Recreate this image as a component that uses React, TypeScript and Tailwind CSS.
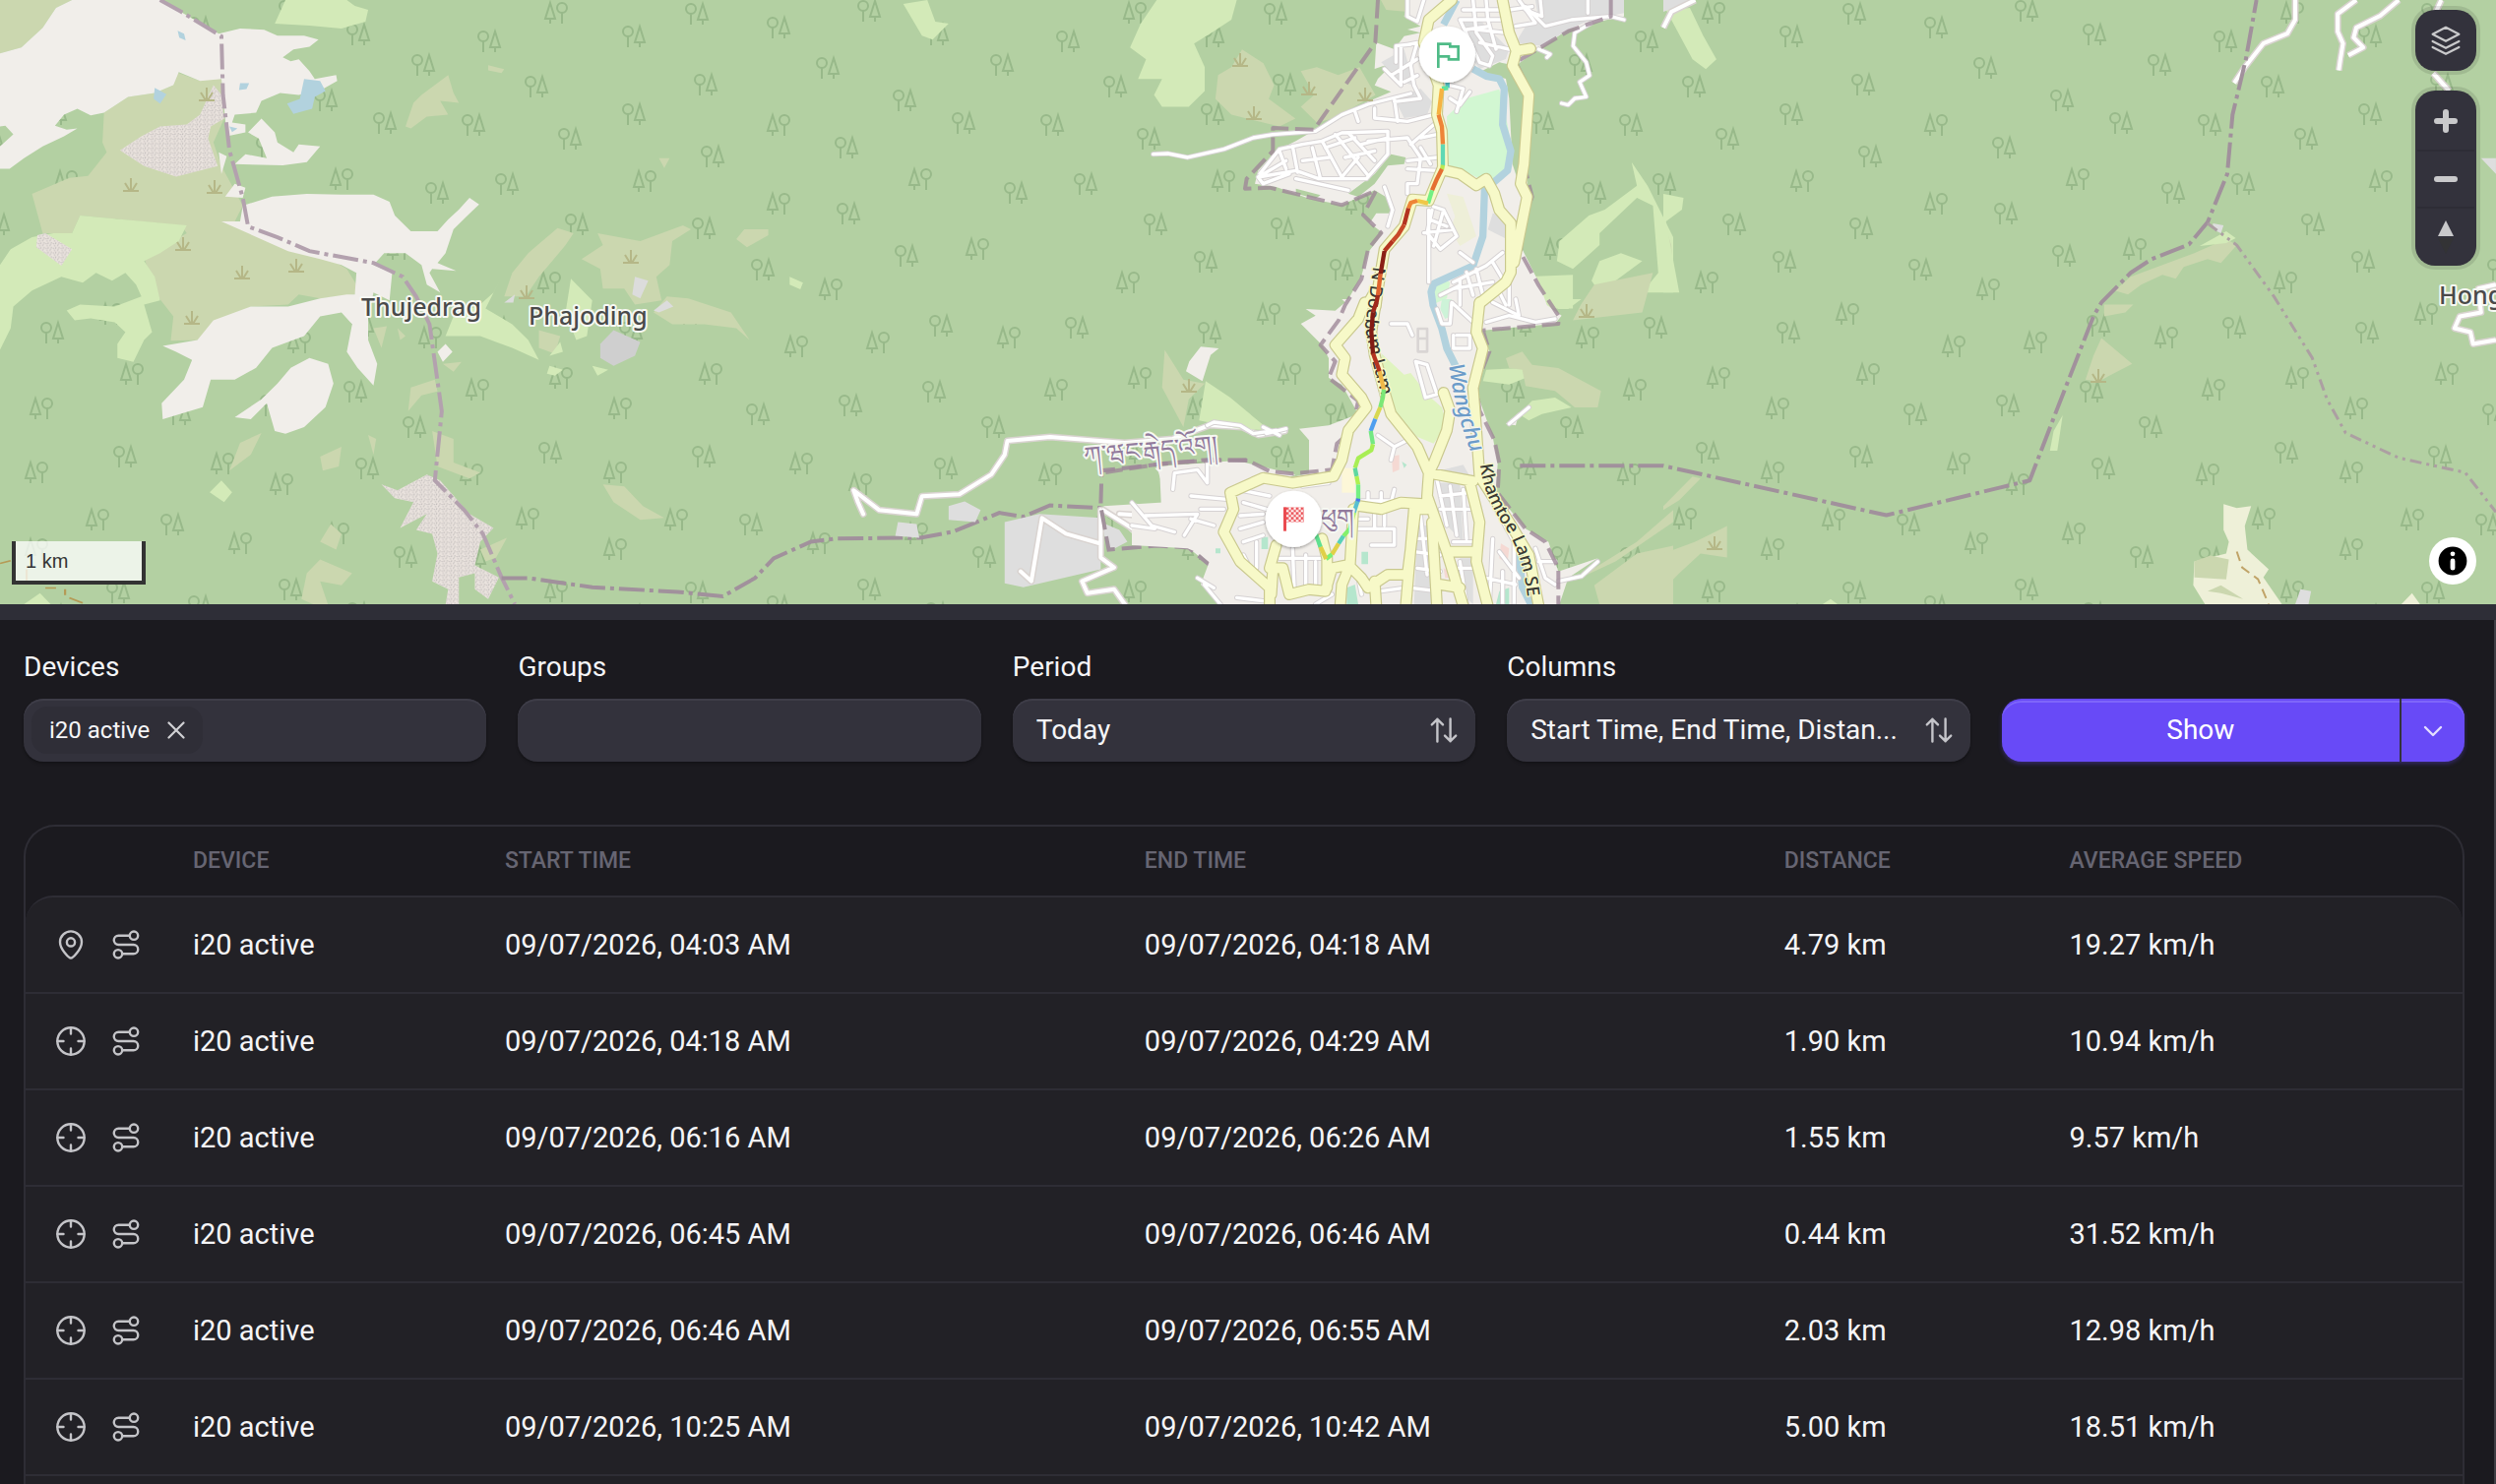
import React, { useState } from "react";

// forest symbols, one repeating block: x, y, 1 when the conifer stands left
const trees = [
  [51, 13, 1], [194, 14, 0], [369, 11, 0], [130, 37, 0], [277, 28, 0], [438, 35, 0], [571, 42, 0],
  [327, 69, 0], [504, 66, 0], [31, 88, 0], [203, 86, 0], [405, 102, 0], [130, 116, 0], [277, 127, 1],
  [465, 125, 0], [555, 127, 0], [65, 141, 0], [346, 150, 0], [210, 159, 0], [141, 184, 1],
  [421, 182, 1], [518, 196, 0], [589, 187, 0], [277, 207, 1], [348, 217, 0], [72, 228, 0],
  [201, 232, 0], [479, 253, 1], [407, 260, 0], [123, 266, 0], [261, 274, 0], [44, 287, 1],
  [330, 294, 1], [187, 319, 1], [127, 338, 0], [295, 352, 1], [378, 348, 1], [442, 331, 0],
  [511, 343, 1], [580, 333, 0], [56, 384, 1], [208, 380, 1], [435, 398, 0], [559, 396, 1],
  [116, 415, 1], [256, 421, 0], [350, 412, 0], [495, 434, 0], [45, 460, 0], [201, 464, 0],
  [111, 480, 1], [300, 471, 1], [447, 476, 0], [553, 482, 1], [360, 492, 1], [22, 527, 1],
  [173, 528, 1], [249, 533, 0], [417, 542, 1], [318, 552, 1], [556, 567, 0], [486, 566, 0], [111, 558, 1]
];
const blocks = [[-662, 0], [-74, 0], [514, 0], [1102, 0], [1690, 0], [2278, 0], [-74, 588], [514, 588], [1102, 588], [1690, 588], [2278, 588]];

const trackNorth = [
  ["M962 250V268", "#4fc3c9"],
  ["M964 268L945 270", "#5fe3a0"],
  ["M945 270L935 350", "#f5b342"],
  ["M935 350L945 385L948 440", "#ee8438"],
  ["M948 440V505", "#5fd8b4"],
  ["M948 503L945 517", "#b8e850"],
  ["M945 515L930 545L915 580", "#e56f32"],
  ["M915 580L903 620", "#74f083"],
  ["M903 620L870 612", "#f0c848"],
  ["M870 612L850 618L843 635", "#ee8438"],
  ["M843 635L830 685", "#b43420"],
  ["M830 685L812 715L795 735", "#c84a28"],
  ["M795 735L770 765", "#b43420"],
  ["M770 765L758 835", "#8a1f15"],
  ["M758 835L750 900", "#e0622e"],
  ["M750 900L743 935", "#a02a1c"]
];

const trackSouth = [
  ["M745 10L735 40", "#a02a1c"],
  ["M735 40L730 100L735 165", "#821c14"],
  ["M735 165L755 220", "#b43420"],
  ["M755 220L768 275", "#f0b848"],
  ["M768 275L765 300L757 330", "#7ce876"],
  ["M757 330L742 365", "#d8d850"],
  ["M742 365L728 402", "#4f9fef"],
  ["M728 402L735 442", "#74e883"],
  ["M735 442L730 460L690 485L680 515", "#a8ee54"],
  ["M680 515L685 540", "#5fd8a0"],
  ["M685 540L690 565", "#b0f050"],
  ["M690 565V610", "#74f083"],
  ["M690 608L688 618", "#4878e8"],
  ["M688 616L677 650", "#58bfd0"],
  ["M677 650L665 700L645 722", "#84f06c"],
  ["M645 722L630 745", "#58d0b8"],
  ["M630 745L610 778", "#e0d048"],
  ["M610 778L592 792", "#7cf074"],
  ["M592 792L575 755", "#e0d048"],
  ["M575 755L560 715", "#60e090"]
];

const mainNorth =
  "M975 0L905 60L890 130L935 260L930 350L945 400L948 510L905 612L855 608L830 690L770 760L750 880L743 935M948 518L1000 530L1050 565L1080 545L1105 590L1120 640L1155 680V830L1140 860L1060 925M1130 0L1150 100L1172 155L1215 148M1172 155L1160 200L1210 290L1195 500L1185 560L1205 600L1185 700L1165 800M720 925L740 890";
const mainSouth =
  "M745 0L730 100L740 170L775 300L790 350L870 450L905 530L900 600L960 770L1010 935M1060 10L1050 100L1070 150L1040 270L1050 400L1060 540L1150 680L1210 780L1240 935M710 10L690 60L620 140L650 180L640 230L700 300L715 330L660 400L640 490L615 540L490 560L400 545L300 590L310 640L280 710L330 800L420 880V935M425 900L430 820H460L480 900L540 885L590 890L610 820L660 810L700 850L720 880L780 840H840L865 640M440 750L420 820M900 600V640L860 640L835 935M690 630L760 640L820 620L900 625M675 640L665 810L640 870L635 935M915 680L930 935M1030 560L1060 680L1050 800L1085 935M905 530L1040 555M950 285L970 340L960 400L920 500L905 530M960 770H1050M940 870L1000 880M580 730L595 790V880M740 860L745 935";
const minorNorth =
  "M65 470L110 468L170 480L280 455L370 420L430 410L560 400L640 350L720 318L850 285M390 530L450 455L520 440L580 430L640 405L780 400V470L715 545H570L500 520L385 540L400 560L480 530M385 540L470 490M450 460L470 515M490 445L505 525M550 450L575 545M580 430L640 540M620 410L720 535M660 405L740 490M700 440L780 420M520 490L600 480M590 450L680 420M650 480L740 460M640 540L690 480M500 545L660 580M720 430L840 420L880 480L870 560H840V590M840 515L930 520M840 490L930 480M880 420L930 410M850 440L920 380M880 450L910 500M740 330V360L840 370L920 350M800 300L810 370M680 340L690 370M770 210L820 260V140L870 130L850 200L860 260L880 300L800 310M790 230L870 180M805 190V140L850 135M830 250L870 230M970 300L1000 320L1030 280M970 260L1010 270L990 340M1000 60L1060 190L1090 200L1100 170M1000 60H1130M1040 0L1050 100L1100 170M1080 0L1085 60L1110 150M1010 30H1130M1050 90L1140 100M1060 130L1150 150M1020 90L1090 80M1170 80L1230 70L1180 0M1150 30L1220 20M1200 20L1260 80L1340 60L1460 50L1500 60M1245 0L1250 50L1200 30M1390 0V40M840 0V50L870 65L890 0M1400 70L1350 100L1345 140L1385 190L1395 230L1365 250L1385 295L1350 300L1330 320L1310 315M1240 150L1275 165L1265 175M770 570L795 640L780 690M920 630L950 640L990 720L940 760L900 710L915 640M905 640V860M950 640L920 750M890 710L980 700M910 670L960 690M980 860L1080 810L1130 770M1000 850V930M1050 820L1070 900M980 880L1100 860M940 900L1000 870M1000 770L1040 800M1020 830L1040 900M1100 800L1130 850M1150 860V930M1120 890L1140 930";
const minorSouth =
  "M790 75H840L855 110M865 190L895 300L930 290L900 200ZM930 30L945 75H970L975 10L1040 70M1080 70L1150 50L1230 70L1290 60M1100 10L1180 50L1170 0M990 110H1030V150H980V110M750 415L800 450L790 490M800 450L840 430M125 580L130 530L200 520L230 560V500M0 620L60 690L130 710M40 660L200 655L160 720M0 690L70 700M180 600L290 610M210 640H280M180 670L250 690M320 580L420 600M340 620L410 640M330 660L400 655M330 700L400 680M340 740L400 720M340 780L360 820M380 740V820M490 760L495 880M530 780V880M560 800V880M450 790H590M520 570L600 560M720 590V630M760 590V620M800 580L790 620M700 615H830M690 700H800V750H730M740 650V700M770 650V690M690 670H720M930 550L960 690M970 570L990 720M940 600L1030 590M940 640L1040 640M1010 580L1020 730M880 660L900 840M850 730H930M860 770L940 780M870 820L940 830M850 880L930 890M1080 850L1170 870M1100 730L1090 930M1110 640L1165 740V930M1130 830V930M1000 800L1020 930M980 740H1060M980 820H1050M1120 770L1180 850M1230 760L1260 850L1290 870M1240 800H1290M1300 860L1370 845L1420 800M230 385L250 375L330 385L370 410L440 400M410 410L470 395M400 390L450 415M200 850L250 880M220 870L270 930M320 910L400 920M690 850L700 900M760 890L830 880M610 900L560 930M1210 330L1150 380";
const hillRoads =
  "M50 1300L40 1270L32 1240L80 1290L150 1300L160 1255L230 1250L290 1200L315 1150L320 1115L400 1105L540 1120L630 1110L700 1075L760 1080L790 1100L840 1090M345 1445L365 1470L385 1310L430 1350L495 1375M495 1290V1410L520 1435L460 1470L470 1500L520 1490L540 1528M500 1290L570 1350M530 1300L640 1310L600 1360M630 1240V1190L700 1190M560 1310L600 1370L660 1370";
const eastRoads =
  "M1190 0V50L1175 85L1130 110L1095 170L1075 210M1305 0L1270 35V80L1280 110L1275 150L1272 178M1385 0L1350 40L1305 70L1300 95L1318 120L1290 140M1465 0L1455 30M1450 185L1480 230M1568 720L1535 730L1540 790L1500 800L1490 830L1520 840L1525 870L1568 860M0 70L15 30L60 0";
const rocks =
  "M400 215L415 240L420 300L395 320L390 350L408 420L330 447L270 420L225 380L265 345L300 320L350 315L375 290ZM70 595L85 590L135 630L115 672L68 625ZM715 1225L745 1240L800 1200L825 1215L880 1300L925 1335L900 1370L890 1430L935 1460L915 1515L890 1490L890 1450L860 1460L860 1530H835L840 1490L810 1470L820 1400L810 1350L780 1340L800 1300L750 1335L775 1270L740 1260Z";

const Trees = () => (
  <g fill="none" stroke="#98b98a" strokeWidth="2">
    {blocks.map(([bx, by], b) =>
      trees.map(([x, y, flip], i) => (
        <g key={b + "-" + i} transform={`translate(${bx + x} ${by + y})${flip ? " scale(-1 1)" : ""}`}>
          <circle cx="-6" cy="-5" r="5" />
          <path d="M-6 0V11M6 -10L1 6H11ZM6 6V11" />
        </g>
      ))
    )}
  </g>
);

const Grass = ({ x, y }: { x: number; y: number }) => (
  <path
    transform={`translate(${x} ${y})`}
    d="M-8 6H8M0 6V-7M-1 6L-6 -2M1 6L6 -2"
    fill="none"
    stroke="#b5b787"
    strokeWidth="2"
  />
);

const MapView = () => (
  <svg className="block h-full w-full" viewBox="0 0 2536 614" preserveAspectRatio="xMidYMin slice" role="img" aria-label="Map">
    <defs>
      <pattern id="rock" width="14" height="12" patternUnits="userSpaceOnUse">
        <path d="M1 3l3 2M7 1l-1 4M10 6l3-2M3 9l3 1M9 10l2-2M12 0l1 2" stroke="#bfbab9" strokeWidth="2" fill="none" />
      </pattern>
      <pattern id="check" width="15" height="15" x="470" y="634" patternUnits="userSpaceOnUse">
        <path d="M0 0h8v8h-8zM8 8h7v7h-7z" fill="#ea4b50" />
      </pattern>
      <filter id="lift" x="-30%" y="-30%" width="160%" height="160%">
        <feDropShadow dx="0" dy="4" stdDeviation="5" floodOpacity="0.35" />
      </filter>
    </defs>
    <rect width="2536" height="640" fill="#b3d0a2" />
    <Trees />

    {/* west hills */}
    <g transform="scale(0.5421 0.4018)">
      <path fill="#cbd7af" d="M0 0H135L105 20L80 70L40 120L0 135ZM330 182L375 205L390 195L415 200L420 300L400 360L415 420L455 520L440 560L465 575L600 640L650 680L668 720L665 745L600 755L560 745L540 770L470 775L400 820L370 860L320 862L325 800L290 740L270 650L350 590L340 570L150 545L135 590L80 590L60 490L130 450L165 445L200 385L192 360L195 285L240 245L290 235L325 215ZM840 190L850 235L860 260L825 255L840 290L800 295L770 325L760 320L775 260L790 240ZM915 165L945 175L940 185L915 178ZM1045 577L1075 590L1060 620L1010 700L985 750L945 750L960 690L990 640ZM1120 590L1200 610L1280 570L1295 580L1260 610L1255 670L1230 700L1240 760L1190 770L1170 730L1130 730L1125 680L1090 655L1130 620ZM1250 750L1290 755L1370 790L1405 860L1380 830L1320 820L1260 820L1225 790ZM1395 580L1440 580L1440 595L1400 625L1380 605ZM1130 1225L1170 1230L1205 1280L1245 1310L1200 1315L1150 1270ZM575 1450L600 1415L660 1450L640 1480L600 1470L615 1530H590L565 1515ZM430 1190L450 1120L490 1095L470 1150ZM600 1370L620 1325L640 1350L630 1390ZM810 1090L850 1110L850 1170L900 1195L880 1210L820 1180ZM770 980L815 960L820 990L790 1000L765 1040ZM600 1155L640 1130L635 1180L605 1190ZM1235 400L1255 400L1245 425ZM1010 835L1050 850L1040 895L1010 880ZM900 1390L950 1360L930 1410L910 1420ZM690 1100L705 1110L700 1150ZM830 920L865 915L850 940ZM700 830L725 825L715 880ZM745 830L760 850L750 860Z" />
      <path fill="#f1eeea" d="M135 0H300L345 35L410 85L450 72L495 75L520 90L570 90L597 100L580 118L550 125L530 145L545 155L560 150L580 180L590 200L630 190L632 205L605 225L560 240L525 235L490 255L480 285L440 290L435 310L460 315V335L425 345L415 200L375 205L335 182L325 215L290 235L240 245L195 285L170 292L145 275L120 290L103 318L125 328L145 325L120 345L80 370L45 400L18 427H0V370L25 340L10 318L0 320V135L40 120L80 70L105 20ZM455 520L510 497L575 490L640 492L700 492L730 510L740 545L770 585H820L840 555L860 530L880 500L898 517L880 540L850 580L835 640L820 665L855 685L810 680L805 690L825 740L800 720L790 670L760 640L720 640L700 670L735 690L730 760L700 740L690 800V860L707 920L700 975L670 930L650 890L660 820L640 790L600 800L570 850L510 880L480 930L440 960L395 960L380 1030L305 1060L303 1020L345 960L360 910L330 890L305 875L370 860L400 810L470 775L540 775L600 755L650 745L665 745L668 690L640 670L600 655L540 635L465 590L415 560L450 560ZM580 905L615 920L625 970L610 1030L570 1080L535 1097L515 1090L500 1020L470 1060L440 1055L490 1010L520 970L545 930ZM440 465L460 475L455 500L422 497ZM490 300L515 335L520 360L550 385L560 365L600 370L575 410L530 418L440 415L460 390L500 400L485 350L465 335ZM410 385L425 395L415 440ZM835 870L848 890L830 915L820 890Z" />
      <path fill="#d3eab8" d="M535 0H650L665 15L690 25L685 55L640 72L580 65L515 60L525 30ZM150 545L350 570L335 610L300 640L270 660L290 700L300 760L270 770L285 840L270 860L250 915L220 905V870L235 840L215 815L170 805L140 810L125 785L150 770L215 775L265 750L255 720L235 690L210 710L180 690L155 715L115 700L60 735L25 775L20 830L0 885V670L20 630L60 600L100 590L135 590ZM940 700L925 740L900 770L850 800L835 850L900 850L960 880L1010 910L990 860L960 820L910 780ZM1070 705L1110 760L1100 850L1080 860L1060 790ZM1030 925L1055 935L1040 950L1025 945ZM1110 925L1140 935L1120 950ZM415 1215L435 1245L420 1270L393 1245ZM45 1528L75 1500L95 1528ZM1480 700L1505 715L1500 732L1480 720ZM1050 865L1055 890L1030 900Z" />
      <path fill="#eae3de" d={rocks} />
      <path fill="url(#rock)" d={rocks} />
      <path fill="#b2d2de" d="M570 200L600 205L610 230L590 245L585 275L550 288L538 262L562 250ZM333 78L345 85L348 102L336 95ZM450 210L467 210L462 225L448 228ZM290 222L312 238L300 262L288 250ZM430 320L445 325L435 334Z" />
      <path fill="#cfcfcf" d="M1150 835L1200 865L1190 900L1150 925L1125 905V870Z" />
      <path fill="#dcdcdc" d="M1190 700L1215 710L1200 755L1185 745ZM1225 785L1250 760L1262 775L1235 790ZM945 765L965 745L962 765Z" />
      <g fill="none" stroke="#a1919c" strokeWidth="4" strokeDasharray="26 5 4 5" className="[&>path]:[vector-effect:non-scaling-stroke]">
        <path d="M300 0L340 30L415 92L418 240L430 380L455 500L465 573L520 600L580 635L700 665L755 700L780 750L805 820L828 1040L815 1215L870 1290L905 1350L940 1460L965 1528" stroke="#b3a1ae" />
        <path d="M940 1462H990L1110 1485L1270 1497L1355 1508L1415 1462L1450 1412L1520 1370L1568 1362L1725 1360L1785 1345L1873 1297L1918 1307L1968 1278L2068 1285" />
      </g>
      <path d="M0 1425L20 1418M50 1440V1470M85 1487H105M122 1490V1505M130 1512L155 1525" fill="none" stroke="#b59a55" strokeWidth="4" />
    </g>
    {[[133, 188], [218, 190], [186, 248], [246, 277], [301, 270], [195, 323], [641, 261], [535, 297], [210, 96]].map(([x, y]) => (
      <Grass key={x} x={x} y={y} />
    ))}

    {/* slopes next to the valley */}
    <g transform="translate(850 0) scale(0.5421 0.4018)">
      <path fill="#d3eab8" d="M600 0H750L740 50L700 85L670 110L690 170V230L660 270L610 270L595 240L610 200L565 200L580 150L550 120L570 60ZM125 10L170 0L185 55L210 60L180 100L160 90ZM1490 410L1520 470L1568 600V740H1510L1540 690L1530 520L1500 500L1430 590L1430 620L1380 680L1350 660L1355 610L1410 545L1440 530L1500 470ZM1430 660L1470 640L1510 660L1430 740L1415 710ZM1290 700L1380 695V780L1320 780Z" />
      <path fill="#cbd7af" d="M760 125L800 160L820 215L810 250L860 300L830 320L740 290L710 250L715 190L740 170ZM870 180L900 170L940 190L980 170L1010 240L930 300L900 310L870 270L895 240ZM1420 720L1530 690L1510 790L1380 810L1395 770ZM1420 1480L1500 1400L1568 1380V1528H1430ZM1380 1470L1500 1370L1568 1290L1568 1320L1460 1420ZM615 885L650 960L690 970L660 1010L650 1080L610 980ZM1020 0H1080L1070 30L1030 25Z" />
      <path fill="#dedede" d="M315 1320L380 1300L495 1310V1440L350 1485L315 1475ZM210 1280L240 1268L270 1290L260 1320L210 1315ZM115 1320L150 1325L155 1360L110 1355ZM495 1320L530 1340L545 1370L510 1395Z" />
      <path fill="#f1eeea" d="M600 1180L750 1165L860 1200L700 1300L720 1530L700 1430L650 1375L570 1370L500 1280L620 1270Z" />
      <g fill="none" strokeLinejoin="round" strokeLinecap="round" className="[&>path]:[vector-effect:non-scaling-stroke]">
        <path stroke="#d9d3d0" strokeWidth="7" d={hillRoads} />
        <path stroke="#ffffff" strokeWidth="4" d={hillRoads} />
      </g>
      <path d="M770 1165L700 1162L600 1175L497 1190L495 1280L510 1390L600 1380L660 1385L700 1430L720 1520" fill="none" stroke="#a1919c" strokeWidth="4" strokeDasharray="20 7" className="[vector-effect:non-scaling-stroke]" />
    </g>

    {/* town */}
    <g transform="translate(1150 0) scale(0.33333)" strokeLinejoin="round">
      <path fill="#f1eeea" d="M840 0H1500V50L1450 60L1330 90L1240 150L1170 200L1200 260L1215 300L1200 520L1210 590L1190 760L1240 860L1265 930H650L700 840L720 770L765 710L725 680L745 650L790 650V610L740 580L640 625L540 605L440 570L375 560L385 520L440 460L500 430L560 395L640 350L720 310L790 280L740 260L750 240L800 190L740 210L745 130L800 150L830 110L880 100L840 90L880 80L830 50Z" />
      <path fill="#f1eeea" transform="translate(0 912)" d="M640 0H1240L1310 50L1290 75L1070 95L1090 160L1050 280L1100 420L1115 500L1110 590L1200 700L1270 740L1300 830L1420 790L1330 850L1300 940H280L210 870L240 790L170 760L0 750V620L90 640L85 530L70 515L300 500L400 530L480 545L540 530V430L510 395L600 385L690 350L640 260L600 240L600 180L580 140L515 75L560 50L530 30L620 35L650 10ZM210 145L265 150L240 170L215 250L165 220L175 190ZM1140 380L1180 345L1170 385Z" />
      <path fill="#b3d0a2" d="M790 470L835 480L830 500L780 505L740 560L690 600L660 590L740 530ZM500 575L575 595L560 605L500 590ZM1170 200L1120 190L1060 220L1140 240L1150 300L1160 500L1180 560L1190 430L1200 300Z" />
      <path fill="#dedede" d="M1230 0H1500V40L1400 60L1330 90L1250 140L1170 130L1200 80L1240 60ZM1000 70L1060 60L1150 150L1140 180L1060 210L1030 170ZM760 190L830 150L860 260L820 250ZM800 300L880 270L915 310L900 350L830 360ZM1100 650L1135 660L1145 730L1085 700Z" />
      <path fill="#d2f7d2" d="M960 355L1020 300L1120 272L1145 380L1160 460L1130 530L1100 560L1050 540L1010 520L965 510ZM915 880L940 850L970 860L960 910L925 925Z" />
      <path fill="#eeefd8" d="M960 590L1010 600L1050 720L1000 750L970 700L985 660Z" />
      <g transform="translate(0 912)">
        <path fill="#e0f4c0" d="M760 165L830 230L850 225L900 290L945 330L960 380L920 440L870 420L800 340L775 280Z" />
        <path fill="#d3eab8" d="M225 250L300 300L420 400L330 395L205 370ZM1080 215L1190 210L1200 240L1150 260L1070 250ZM1180 350L1220 310L1290 300L1340 330L1250 350L1210 370ZM1270 0H1370L1330 30L1300 30Z" />
        <path fill="#cbd7af" d="M1140 180L1190 160L1220 200L1300 210L1430 280L1420 330H1350L1290 280L1200 265L1190 215L1150 210Z" />
        <path fill="#dedede" d="M950 520L1010 505L1030 540L950 545ZM930 560L1000 560L1010 740L960 690ZM870 690H920V930H860ZM1000 790H1040V930L1010 900Z" />
        <path fill="#f5d9d3" d="M792 480L815 475L815 520L795 528ZM1125 745L1150 760L1145 805L1120 790ZM950 820L970 830V850H955Z" />
        <path fill="#b5e6cd" d="M395 725H415V762H395ZM700 770H720V808H700ZM823 495L838 505L830 515ZM255 760H270V775H255ZM655 880L680 870L690 930H655ZM1120 890L1150 880V930H1110Z" />
        <path fill="#fdf7d8" d="M640 515H680V590H640Z" />
        <path fill="none" stroke="#d9d5d4" strokeWidth="8" d="M872 90H900V160H872ZM872 120H900" />
        <path fill="#cdf3d8" d="M945 0H975V50L955 60L940 30Z" />
      </g>
      <g fill="none" stroke="#b2d2de" strokeWidth="22">
        <path d="M990 0L950 75M1040 210L1080 232L1120 240L1135 270L1130 380L1155 460L1145 520L1075 580L1070 720L1040 810L920 865L912 890L918 930L945 1002L960 1062L990 1122" />
        <path d="M1180 1690L1190 1790L1220 1850" />
      </g>

      <g fill="none" strokeLinecap="round">
        <path d={minorNorth} stroke="#d6d2d3" strokeWidth="16" />
        <path d={minorSouth} stroke="#d6d2d3" strokeWidth="16" transform="translate(0 912)" />
        <path d={minorNorth} stroke="#ffffff" strokeWidth="10" />
        <path d={minorSouth} stroke="#ffffff" strokeWidth="10" transform="translate(0 912)" />
      </g>
      <g fill="none" stroke="#9f8899" strokeOpacity="0.8" strokeWidth="12" strokeDasharray="56 20">
        <path d="M750 0L742 130L555 395L430 390V460L350 545L345 575L420 572L640 625L745 580L705 655L760 710L720 760L700 850L650 930L630 977L575 1052L620 1102L600 1152L690 1222L670 1312L625 1352L610 1432L490 1444L420 1437L350 1402L240 1404L100 1412L-80 1440" />
        <path d="M1460 0V50L1330 95L1170 190L1215 280L1210 400L1200 520L1220 600L1190 680L1185 770L1240 870L1300 962V987L1070 1007L1090 1072L1050 1172L1060 1252L1105 1342L1120 1412L1115 1502L1200 1612L1260 1652L1300 1732V1842" />
      </g>
      <g fill="none" strokeLinecap="round">
        <path d={mainNorth} stroke="#c9c88e" strokeWidth="36" />
        <path d={mainSouth} stroke="#c9c88e" strokeWidth="36" transform="translate(0 912)" />
        <path d={mainNorth} stroke="#f7f9c8" strokeWidth="29" />
        <path d={mainSouth} stroke="#f7f9c8" strokeWidth="29" transform="translate(0 912)" />
      </g>

      <path id="doebum" d="M736 812L710 1000L735 1110L765 1220" fill="none" />
      <path id="wangchu" d="M966 1112Q985 1260 1038 1390" fill="none" />
      <path id="khamtoe" d="M1062 1416Q1070 1500 1125 1590Q1195 1680 1208 1840" fill="none" />
      <g className="font-['Noto_Sans'] font-medium" strokeLinejoin="round" paintOrder="stroke">
        <text fontSize="54" fill="#3a3a34" stroke="#f7f9c8" strokeWidth="8">
          <textPath href="#doebum">N Doebum Lam</textPath>
        </text>
        <text fontSize="66" fontStyle="italic" fill="#6b9bc9" stroke="#f4f3ee" strokeWidth="8">
          <textPath href="#wangchu">Wangchu</textPath>
        </text>
        <text fontSize="54" fill="#3a3a34" stroke="#f7f9c8" strokeWidth="8">
          <textPath href="#khamtoe">Khamtoe Lam SE</textPath>
        </text>
      </g>

      <g fill="none" strokeWidth="13">
        {trackNorth.map(([d, color]) => (
          <path key={d} d={d} stroke={color} />
        ))}
        <g transform="translate(0 912)">
          {trackSouth.map(([d, color]) => (
            <path key={d} d={d} stroke={color} />
          ))}
        </g>
      </g>
    </g>
    {[[1260, 61], [1274, 115], [1330, 90], [1387, 96], [1612, 316], [1208, 392]].map(([x, y]) => (
      <Grass key={x} x={x} y={y} />
    ))}

    {/* east ridge */}
    <g transform="translate(1690 0) scale(0.5395 0.4018)">
      <path fill="#cbd7af" d="M850 735L880 700L930 675L1000 640L1060 605L1080 620L1050 665L1025 655L980 675L965 705L940 695L900 720L875 745ZM830 770L885 770L870 790L830 800ZM825 855L883 920L840 950L820 965L795 960L810 900ZM0 1400L60 1370L120 1330V1410L70 1400L30 1450L0 1490ZM0 560L15 620L18 690H0ZM0 1280L55 1205L70 1210L30 1265L0 1290Z" />
      <path fill="#d3eab8" d="M5 25L50 20L75 90L100 150L80 175L55 150ZM0 490L38 500L35 530L5 560L30 740H0ZM1010 622L1060 585L1078 602L1060 615ZM752 1050L742 1140L728 1140L735 1090ZM300 1528L315 1515L328 1528Z" />
      <path fill="#eef0d8" d="M1055 1275L1080 1285L1107 1280L1095 1330L1100 1390L1140 1440L1130 1460L1165 1528H1020L998 1480L1000 1420L1060 1400L1065 1370L1055 1340ZM1390 1528L1410 1500L1425 1528Z" />
      <path fill="#cbd7af" d="M1000 1420L1030 1405L1065 1415L1060 1465L1000 1460ZM1025 1495L1050 1480L1092 1515L1050 1500Z" />
      <path fill="#dedede" d="M1035 565L1055 570L1050 590L1035 580ZM1540 400L1568 400V440ZM1190 1528L1200 1490L1220 1495L1215 1528ZM0 0H60L0 30Z" />
      <g fill="none" strokeLinejoin="round" className="[&>path]:[vector-effect:non-scaling-stroke]">
        <path stroke="#d9d3d0" strokeWidth="7" d={eastRoads} />
        <path stroke="#ffffff" strokeWidth="4" d={eastRoads} />
        <path stroke="#a1919c" strokeWidth="4" strokeDasharray="26 5 4 5" d="M-270 1178H0L420 1303L690 1215L740 1040L810 800L825 765L880 690L920 655L990 618L1025 562L1062 440L1072 290L1097 150L1117 0" />
        <path stroke="#ac9fa2" strokeWidth="3" strokeDasharray="12 5 3 5 3 5" d="M1025 565L1080 620L1150 750L1222 905L1250 1010L1285 1095L1385 1158L1510 1195L1568 1295" />
        <path stroke="#c0a468" strokeWidth="2" strokeDasharray="10 6" d="M1080 1395L1090 1435L1120 1465L1140 1528" />
      </g>
    </g>
    <Grass x={1742} y={552} />
    <Grass x={2132} y={382} />

    <g className="font-['Noto_Sans'] font-medium" fontSize="25" fill="#4a4a4a" stroke="#f6f8f2" strokeWidth="4" strokeLinejoin="round" paintOrder="stroke">
      <text x="367" y="321">Thujedrag</text>
      <text x="537" y="330">Phajoding</text>
      <text x="2478" y="309">Hong</text>
      <text x="1102" y="472" fill="#917a9c" transform="rotate(-5 1102 472)">ཀ་ཝང་རྒེད་འོག།</text>
      <text x="1342" y="535" fill="#917a9c">ཕུག</text>
    </g>

    {/* start and finish markers */}
    <g transform="translate(1150 0) scale(0.33333)">
      <circle cx="961" cy="166" r="86" fill="#fff" filter="url(#lift)" />
      <path d="M934 207V134H970V142H995V181H966V172H934" fill="none" stroke="#4fbb87" strokeWidth="8" />
      <g transform="translate(0 912)">
        <circle cx="493" cy="670" r="86" fill="#fff" filter="url(#lift)" />
        <path d="M462 634H471V707H462Z" fill="#ea4b50" />
        <path d="M470 634H525V680H470Z" fill="url(#check)" />
      </g>
    </g>
  </svg>
);

const MapControls = () => (
  <div className="absolute right-5 top-[10px] flex flex-col gap-5 text-[#c9c9cb]">
    <button aria-label="Layers" className="flex h-[62px] w-[62px] items-center justify-center rounded-[20px] bg-[#33323c] shadow-[0_0_0_4px_rgba(0,0,0,0.1)]">
      <svg width="32" height="32" viewBox="0 0 32 32" fill="none" stroke="currentColor" strokeWidth="2.2" strokeLinejoin="round" strokeLinecap="round">
        <path d="M16 2.8L29.4 9.8L16 16.8L2.6 9.8ZM2.6 17L16 23.8L29.4 17M2.6 23L16 29.8L29.4 23" />
      </svg>
    </button>
    <div className="flex w-[62px] flex-col rounded-[20px] bg-[#33323c] shadow-[0_0_0_4px_rgba(0,0,0,0.1)]">
      <button aria-label="Zoom in" className="flex h-[60px] items-center justify-center pt-[2px]">
        <svg width="24" height="24" viewBox="0 0 24 24" stroke="currentColor" strokeWidth="6" strokeLinecap="round">
          <path d="M12 3V21M3 12H21" />
        </svg>
      </button>
      <button aria-label="Zoom out" className="mx-[2px] flex h-[58px] items-center justify-center border-t-2 border-[#2e2d36]">
        <svg width="24" height="24" viewBox="0 0 24 24" stroke="currentColor" strokeWidth="6" strokeLinecap="round">
          <path d="M3 12H21" />
        </svg>
      </button>
      <button aria-label="Reset bearing" className="mx-[2px] flex h-[60px] items-center justify-center border-t-2 border-[#2e2d36]">
        <svg width="16" height="34" viewBox="0 0 16 34">
          <path d="M8 0L16 16H0Z" fill="currentColor" />
          <path d="M8 34L16 18H0Z" fill="#333335" />
        </svg>
      </button>
    </div>
  </div>
);

const SortIcon = () => (
  <svg width="28" height="26" viewBox="0 0 28 26" fill="none" stroke="#c4c4c9" strokeWidth="2.4" strokeLinecap="round" strokeLinejoin="round">
    <path d="M7.4 24.5V1.8M1.8 7.4L7.4 1.8L13 7.4M20.6 1.5V24.2M15 18.6L20.6 24.2L26.2 18.6" />
  </svg>
);

const SelectField = ({ id, label, options }: { id: string; label: string; options: string[] }) => (
  <div className="flex flex-col gap-4">
    <label htmlFor={id}>{label}</label>
    <div className="relative h-16">
      <select
        id={id}
        className="h-full w-full appearance-none rounded-[20px] bg-[#33323c] pl-6 pr-14 text-[#f5f5f7] shadow-[inset_0_2px_0_#3e3d48,0_2px_3px_rgba(0,0,0,0.3)] outline-none"
      >
        {options.map((option) => (
          <option key={option}>{option}</option>
        ))}
      </select>
      <div className="pointer-events-none absolute inset-y-0 right-[18px] flex items-center">
        <SortIcon />
      </div>
    </div>
  </div>
);

const iconProps = {
  width: 32,
  height: 32,
  viewBox: "0 0 32 32",
  fill: "none",
  stroke: "#c4c4c8",
  strokeWidth: 2.4,
  strokeLinecap: "round",
  strokeLinejoin: "round"
} as const;

const PinIcon = () => (
  <svg {...iconProps}>
    <path d="M16 29.6C14.2 29.6 5 20.8 5 13.2A11 10.8 0 0 1 27 13.2C27 20.8 17.8 29.6 16 29.6Z" />
    <circle cx="16" cy="13.4" r="4.1" />
  </svg>
);

const LocateIcon = () => (
  <svg {...iconProps}>
    <circle cx="16" cy="16" r="13.7" />
    <path d="M16 2.5V8.5M16 23.5V29.5M2.5 16H8.5M23.5 16H29.5" />
  </svg>
);

const RouteIcon = () => (
  <svg {...iconProps}>
    <circle cx="24" cy="6.7" r="4.2" />
    <circle cx="8" cy="25.3" r="4.2" />
    <path d="M19.8 6.7H8.4A4.65 4.65 0 0 0 8.4 16H23.6A4.65 4.65 0 0 1 23.6 25.3H12.2" />
  </svg>
);

const trips = [
  { start: "09/07/2026, 04:03 AM", end: "09/07/2026, 04:18 AM", distance: "4.79 km", speed: "19.27 km/h" },
  { start: "09/07/2026, 04:18 AM", end: "09/07/2026, 04:29 AM", distance: "1.90 km", speed: "10.94 km/h" },
  { start: "09/07/2026, 06:16 AM", end: "09/07/2026, 06:26 AM", distance: "1.55 km", speed: "9.57 km/h" },
  { start: "09/07/2026, 06:45 AM", end: "09/07/2026, 06:46 AM", distance: "0.44 km", speed: "31.52 km/h" },
  { start: "09/07/2026, 06:46 AM", end: "09/07/2026, 06:55 AM", distance: "2.03 km", speed: "12.98 km/h" },
  { start: "09/07/2026, 10:25 AM", end: "09/07/2026, 10:42 AM", distance: "5.00 km", speed: "18.51 km/h" }
];

const TripTable = ({ selected, onSelect }: { selected: number; onSelect: (index: number) => void }) => (
  <div className="rounded-t-[32px] border-2 border-b-0 border-[#2e2d35]">
    <table className="w-full table-fixed border-separate border-spacing-0 text-left text-[29px] [&_td]:h-[98px] [&_td]:border-t-2 [&_td]:border-[#2e2d35] [&_td]:bg-[#222126] [&_td]:px-6 [&_th]:h-[70px] [&_th]:px-6 [&_th]:font-medium">
      <colgroup>
        <col className="w-[146px]" />
        <col className="w-[12.8%]" />
        <col className="w-[26.25%]" />
        <col className="w-[26.25%]" />
        <col className="w-[11.7%]" />
        <col />
      </colgroup>
      <thead className="text-[23px] text-[#666572]">
        <tr>
          <th></th>
          <th>DEVICE</th>
          <th>START TIME</th>
          <th>END TIME</th>
          <th>DISTANCE</th>
          <th>AVERAGE SPEED</th>
        </tr>
      </thead>
      <tbody className="[&>tr:first-child>td:first-child]:rounded-tl-[28px] [&>tr:first-child>td:last-child]:rounded-tr-[28px]">
        {trips.map((trip, index) => (
          <tr key={index}>
            <td>
              <div className="flex gap-6 pl-[6px]">
                <button aria-label="Show on map" onClick={() => onSelect(index)}>
                  {selected === index ? <PinIcon /> : <LocateIcon />}
                </button>
                <button aria-label="Replay route">
                  <RouteIcon />
                </button>
              </div>
            </td>
            <td>i20 active</td>
            <td>{trip.start}</td>
            <td>{trip.end}</td>
            <td>{trip.distance}</td>
            <td>{trip.speed}</td>
          </tr>
        ))}
        <tr>
          <td colSpan={6}></td>
        </tr>
      </tbody>
    </table>
  </div>
);

const App = () => {
  const [selected, setSelected] = useState(0);

  return (
    <div className="flex h-screen flex-col overflow-hidden bg-[#1b1a1f] font-[Roboto,sans-serif] text-[28px] leading-8 text-[#f5f5f7]">
      <div className="relative h-[40.7vh] shrink-0 overflow-hidden">
        <MapView />
        <MapControls />
        <div className="absolute bottom-5 left-3 h-11 w-[136px] border-4 border-t-0 border-[#333] bg-white/75 pl-[10px] font-['Liberation_Sans',sans-serif] text-[20px] leading-10 text-[#333]">
          1 km
        </div>
        <button aria-label="Attribution" className="absolute bottom-5 right-5 h-12 w-12 rounded-full bg-white">
          <svg width="48" height="48" viewBox="0 0 20 20" fillRule="evenodd">
            <path d="M4 10a6 6 0 1 0 12 0 6 6 0 1 0-12 0m5-3a1 1 0 1 0 2 0 1 1 0 1 0-2 0m0 3a1 1 0 1 1 2 0v3a1 1 0 1 1-2 0" />
          </svg>
        </button>
      </div>

      <div role="separator" className="h-4 shrink-0 bg-[#2e2e37]" />

      <div className="flex min-h-0 flex-1 flex-col gap-16 border-r-2 border-[#3f3e44] pl-6 pr-[30px] pt-8">
        <div className="grid shrink-0 grid-cols-5 items-end gap-8">
          <div className="flex flex-col gap-4">
            <label htmlFor="devices">Devices</label>
            <div className="flex h-16 items-center rounded-[20px] bg-[#33323c] px-2 shadow-[inset_0_2px_0_#3e3d48,0_2px_3px_rgba(0,0,0,0.3)]">
              <div className="flex h-12 shrink-0 items-center gap-[18px] rounded-[16px] bg-[#2f2e37] px-[18px] text-[24px]">
                i20 active
                <button aria-label="Remove i20 active">
                  <svg width="18" height="18" viewBox="0 0 18 18" stroke="#d0d0d4" strokeWidth="2.2" strokeLinecap="round">
                    <path d="M1.5 1.5L16.5 16.5M16.5 1.5L1.5 16.5" />
                  </svg>
                </button>
              </div>
              <input id="devices" className="min-w-0 flex-1 bg-transparent outline-none" />
            </div>
          </div>
          <div className="flex flex-col gap-4">
            <label htmlFor="groups">Groups</label>
            <input
              id="groups"
              className="h-16 w-full rounded-[20px] bg-[#33323c] px-6 shadow-[inset_0_2px_0_#3e3d48,0_2px_3px_rgba(0,0,0,0.3)] outline-none"
            />
          </div>
          <SelectField id="period" label="Period" options={["Today"]} />
          <SelectField id="columns" label="Columns" options={["Start Time, End Time, Distan..."]} />
          <div className="flex h-16 gap-[2px] rounded-[20px] bg-[#33323c] text-white shadow-[0_2px_4px_rgba(104,74,247,0.35)]">
            <button className="flex-1 rounded-l-[20px] border-t-2 border-[#684af7] bg-[#684af7] pb-[2px] shadow-[inset_0_2px_0_#7e66fa]">
              Show
            </button>
            <button
              aria-label="More actions"
              className="flex w-16 items-center justify-center rounded-r-[20px] border-t-2 border-[#684af7] bg-[#684af7] shadow-[inset_0_2px_0_#7e66fa]"
            >
              <svg width="20" height="12" viewBox="0 0 20 12" fill="none" stroke="#e4defd" strokeWidth="2.4" strokeLinecap="round" strokeLinejoin="round">
                <path d="M2 2L10 10L18 2" />
              </svg>
            </button>
          </div>
        </div>
        <TripTable selected={selected} onSelect={setSelected} />
      </div>
    </div>
  );
};

export default App;
